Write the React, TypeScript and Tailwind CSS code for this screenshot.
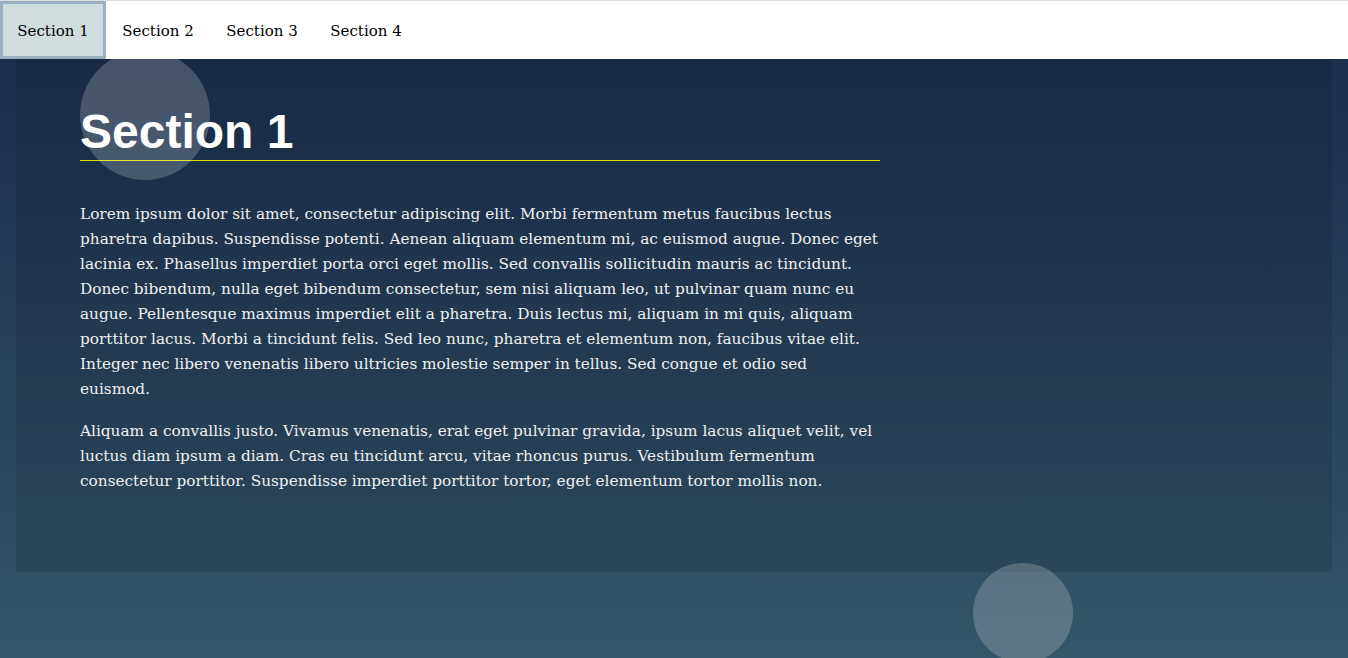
import React from "react";

const p1 = [
  "Lorem ipsum dolor sit amet, consectetur adipiscing elit. Morbi fermentum metus faucibus lectus",
  "pharetra dapibus. Suspendisse potenti. Aenean aliquam elementum mi, ac euismod augue. Donec eget",
  "lacinia ex. Phasellus imperdiet porta orci eget mollis. Sed convallis sollicitudin mauris ac tincidunt.",
  "Donec bibendum, nulla eget bibendum consectetur, sem nisi aliquam leo, ut pulvinar quam nunc eu",
  "augue. Pellentesque maximus imperdiet elit a pharetra. Duis lectus mi, aliquam in mi quis, aliquam",
  "porttitor lacus. Morbi a tincidunt felis. Sed leo nunc, pharetra et elementum non, faucibus vitae elit.",
  "Integer nec libero venenatis libero ultricies molestie semper in tellus. Sed congue et odio sed",
  "euismod.",
];
const p2 = [
  "Aliquam a convallis justo. Vivamus venenatis, erat eget pulvinar gravida, ipsum lacus aliquet velit, vel",
  "luctus diam ipsum a diam. Cras eu tincidunt arcu, vitae rhoncus purus. Vestibulum fermentum",
  "consectetur porttitor. Suspendisse imperdiet porttitor tortor, eget elementum tortor mollis non.",
];

function Para({ lines, className }: { lines: string[]; className?: string }) {
  return (
    <p className={className}>
      {lines.map((l, i) => (
        <span key={i} className="block whitespace-nowrap">
          {l}
        </span>
      ))}
    </p>
  );
}

export default function App() {
  const tabs = ["Section 1", "Section 2", "Section 3", "Section 4"];
  return (
    <div
      className="relative h-[658px] overflow-hidden"
      style={{ fontFamily: '"DejaVu Serif", serif' }}
    >
      <nav className="relative z-20 flex h-[59px] border-t border-[#dddde0] bg-white">
        {tabs.map((t, i) => (
          <div
            key={t}
            className={
              i === 0
                ? "flex h-[58px] w-[106px] items-center justify-center border-[3px] border-[#9bb0c0] bg-[#d1dcdf] pt-[2px] text-[15px] text-black"
                : "flex h-[58px] w-[104px] items-center justify-center pt-[2px] text-[15px] text-black"
            }
          >
            {t}
          </div>
        ))}
      </nav>
      <main className="relative h-[599px] bg-gradient-to-b from-[#1b2e4e] to-[#33566a] px-4">
        <div className="pointer-events-none absolute left-[80px] top-[-9px] z-10 h-[130px] w-[130px] rounded-full bg-white/20" />
        <div className="pointer-events-none absolute left-[973px] top-[504px] z-10 h-[100px] w-[100px] rounded-full bg-white/20" />
        <section className="h-[513px] bg-black/10 pl-16 pt-[45px]">
          <div className="w-[800px]">
            <h1
              className="text-[48px] font-bold leading-[56px] text-white"
              style={{ fontFamily: '"Liberation Sans", Arial, sans-serif' }}
            >
              Section 1
            </h1>
            <div className="h-px w-full bg-[#e0e000]" />
            <div className="mt-[41px] text-[15.3px] leading-[25px] text-[#f0f0f0]">
              <Para lines={p1} />
              <Para lines={p2} className="mt-[17px]" />
            </div>
          </div>
        </section>
      </main>
    </div>
  );
}
